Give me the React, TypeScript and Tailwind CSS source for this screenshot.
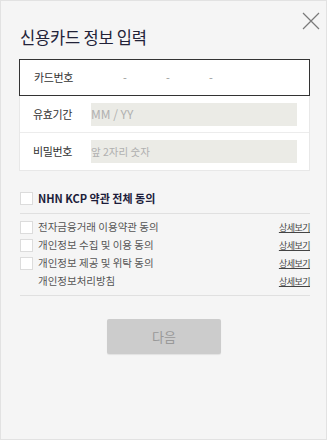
import React from "react";

const terms = [
  { label: "전자금융거래 이용약관 동의", check: true },
  { label: "개인정보 수집 및 이용 동의", check: true },
  { label: "개인정보 제공 및 위탁 동의", check: true },
  { label: "개인정보처리방침", check: false },
];

function Box() {
  return <span className="block w-[13px] h-[13px] bg-white border border-[#dcdcdc] shrink-0" />;
}

export default function App() {
  return (
    <div
      className="w-[327px] h-[440px] bg-[#f5f5f5] border border-[#e2e2e2] relative"
      style={{ fontFamily: '"Noto Sans CJK KR", "Noto Sans", sans-serif' }}
    >
      {/* Close */}
      <button className="absolute left-[301px] top-[11px] w-[18px] h-[18px]">
        <svg viewBox="0 0 18 18" className="w-[18px] h-[18px]" fill="none" stroke="#7a7a7a" strokeWidth="1.2">
          <path d="M1 1 L17 17 M17 1 L1 17" />
        </svg>
      </button>

      <div className="pt-[26px] pl-[18px] pr-[16px]">
        <h1 className="text-[16.5px] leading-[20px] text-[#222238] pl-[1px] tracking-[-0.2px]">신용카드 정보 입력</h1>

        {/* Card form */}
        <div className="mt-[12px] bg-white border border-[#e8e8e8] text-[11px] tracking-[-0.4px] text-[#333]">
          <div className="flex items-center h-[37px] border border-[#333] -m-px mb-0 pl-[14px]">
            <span className="w-[58px]">카드번호</span>
            <div className="flex text-[#999] text-[11px]">
              <span className="ml-[31px] w-[5px]">-</span>
              <span className="ml-[38px] w-[5px]">-</span>
              <span className="ml-[38px] w-[5px]">-</span>
            </div>
          </div>
          <div className="flex items-center h-[37px] border-b border-[#ececec] pl-[13px]">
            <span className="w-[58px]">유효기간</span>
            <div className="w-[206px] h-[23px] bg-[#ebebe6] flex items-center text-[#b0b0b0] text-[12px] tracking-normal">MM / YY</div>
          </div>
          <div className="flex items-center h-[37px] pl-[13px]">
            <span className="w-[58px]">비밀번호</span>
            <div className="w-[206px] h-[23px] bg-[#ebebe6] flex items-center text-[#b0b0b0] text-[10.5px] tracking-normal">앞 2자리 숫자</div>
          </div>
        </div>

        {/* Terms */}
        <div className="mt-[21px] pl-[1px]">
          <div className="flex items-center gap-[5px] h-[13px]">
            <Box />
            <span className="text-[11px] font-bold text-[#1c1c3a] leading-none">NHN KCP 약관 전체 동의</span>
          </div>
          <div className="mt-[8px] border-t border-[#e0e0e0]" />
          <div className="pt-[4px] pb-[5px]">
            {terms.map((t) => (
              <div key={t.label} className="flex items-center h-[18px] leading-none">
                {t.check ? <Box /> : <span className="w-[13px] shrink-0" />}
                <span className="ml-[5px] text-[#555] text-[10.5px]">{t.label}</span>
                <span className="ml-auto text-[#444] underline text-[9px] tracking-[-0.5px]">상세보기</span>
              </div>
            ))}
          </div>
          <div className="border-t border-[#e0e0e0]" />
        </div>

        <div className="flex justify-center mt-[23px]">
          <button className="w-[114px] h-[35px] bg-[#cccccc] rounded-[2px] shadow-[0_1px_1px_rgba(0,0,0,0.08)] text-[13px] text-[#999] -ml-[1px]">
            다음
          </button>
        </div>
      </div>
    </div>
  );
}
